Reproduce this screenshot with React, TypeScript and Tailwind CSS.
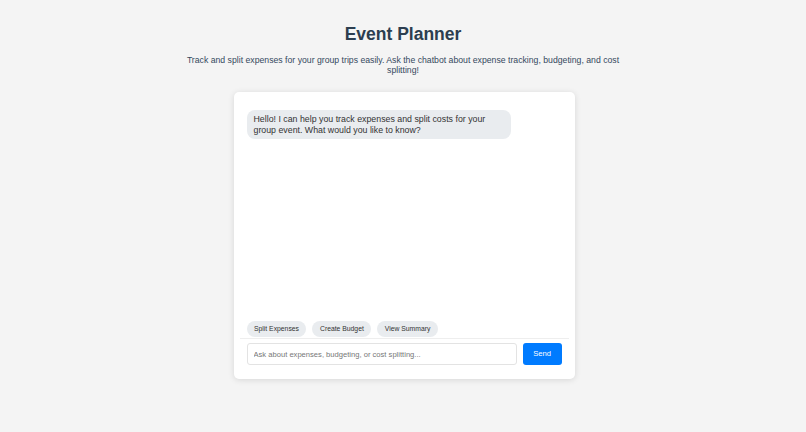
const QUICK = ["Split Expenses", "Create Budget", "View Summary"];

export default function App() {
  return (
    <div
      className="flex h-[432px] flex-col items-center bg-[#f4f4f4] pt-[22px] text-[#333]"
      style={{ fontFamily: '"Liberation Sans", Arial, sans-serif' }}
    >
      <h1 className="text-[17.5px] font-bold leading-[24px] text-[#2c3e50]">Event Planner</h1>
      <p className="mt-[9px] w-[450px] text-center text-[8.7px] leading-[10px] text-[#34495e]">
        Track and split expenses for your group trips easily. Ask the chatbot about expense tracking,
        budgeting, and cost splitting!
      </p>

      <div className="mt-[17px] ml-[2px] flex h-[287px] w-[341px] flex-col rounded-[5px] bg-white px-[6px] pb-[14px] shadow-[0_1px_6px_rgba(0,0,0,0.12)]">
        <div className="flex flex-1 flex-col px-[7px] pt-[18px]">
          <div className="w-[264px] rounded-[8px] bg-[#e9ecef] px-[7px] py-[4px] text-[8.8px] leading-[10.5px] text-[#333]">
            Hello! I can help you track expenses and split costs for your group event. What would you
            like to know?
          </div>
        </div>
        <div className="flex gap-[6px] px-[7px] pb-[1px]">
          {QUICK.map((q) => (
            <button
              key={q}
              type="button"
              className="h-[16px] rounded-full bg-[#e9ecef] px-[7.5px] text-[6.8px] leading-[16px] text-[#333]"
            >
              {q}
            </button>
          ))}
        </div>
        <div className="flex gap-[6px] border-t border-[#eee] px-[7px] pt-[4px]">
          <input
            placeholder="Ask about expenses, budgeting, or cost splitting..."
            className="h-[22px] w-[270px] rounded-[3px] border border-[#e3e3e3] px-[6px] text-[7.6px] text-[#333] outline-none placeholder:text-[#777]"
          />
          <button
            type="button"
            className="h-[22px] w-[39px] rounded-[3px] bg-[#007bff] text-[7.6px] text-white"
          >
            Send
          </button>
        </div>
      </div>
    </div>
  );
}
